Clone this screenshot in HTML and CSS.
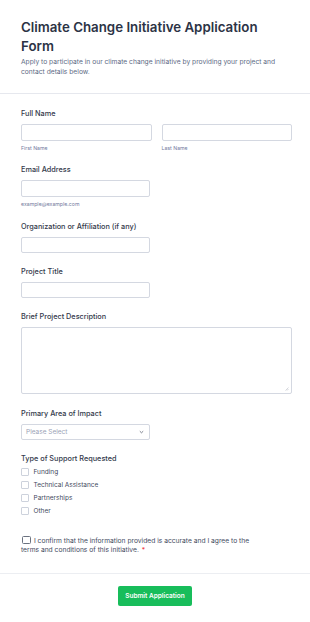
FILE: index.html
```html
<!DOCTYPE html>
<html lang="en">
<head>
<meta charset="utf-8">
<title>Climate Change Initiative Application Form</title>
<link rel="stylesheet" href="styles.css">
</head>
<body>
<div class="page">
  <header class="header">
    <h1 class="title">Climate Change Initiative Application Form</h1>
    <p class="subtitle">Apply to participate in our climate change initiative by providing your project and contact details below.</p>
  </header>
  <form class="form">
    <div class="field field-sub">
      <div class="label">Full Name</div>
      <div class="name-row">
        <div class="name-col">
          <input class="input" type="text">
          <div class="sublabel">First Name</div>
        </div>
        <div class="name-col">
          <input class="input" type="text">
          <div class="sublabel">Last Name</div>
        </div>
      </div>
    </div>
    <div class="field">
      <div class="label">Email Address</div>
      <input class="input input-half" type="email">
      <div class="sublabel">example@example.com</div>
    </div>
    <div class="field">
      <div class="label">Organization or Affiliation (if any)</div>
      <input class="input input-half" type="text">
    </div>
    <div class="field">
      <div class="label">Project Title</div>
      <input class="input input-half" type="text">
    </div>
    <div class="field field-text">
      <div class="label">Brief Project Description</div>
      <div class="textarea-wrap">
        <textarea class="textarea"></textarea>
        <svg class="grip" width="4" height="4" viewBox="0 0 4 4"><path d="M0.5 3.5 L3.5 0.5 M2 3.5 L3.5 2" stroke="#b8bcc6" stroke-width="0.6" fill="none"/></svg>
      </div>
    </div>
    <div class="field">
      <div class="label">Primary Area of Impact</div>
      <div class="select input-half">
        <span class="placeholder">Please Select</span>
        <svg class="chev" width="5" height="4" viewBox="0 0 5 4"><path d="M0.8 1.2 L2.5 2.8 L4.2 1.2" fill="none" stroke="#6b7280" stroke-width="0.9"/></svg>
      </div>
    </div>
    <div class="field field-checks">
      <div class="label label-checks">Type of Support Requested</div>
      <div class="check-row"><span class="box"></span><span class="check-text">Funding</span></div>
      <div class="check-row"><span class="box"></span><span class="check-text">Technical Assistance</span></div>
      <div class="check-row"><span class="box"></span><span class="check-text">Partnerships</span></div>
      <div class="check-row"><span class="box"></span><span class="check-text">Other</span></div>
    </div>
    <div class="confirm">
      <span class="confirm-box"></span> <span class="confirm-text">I confirm that the information provided is accurate and I agree to the</span> <span class="confirm-text">terms and conditions of this initiative.</span><span class="req">*</span>
    </div>
  </form>
  <div class="footer">
    <button class="submit" type="button">Submit Application</button>
  </div>
</div>
</body>
</html>
```

FILE: styles.css
```css
* { box-sizing: border-box; }
html, body { margin: 0; padding: 0; background: #ffffff; }
body {
  font-family: Inter, "Noto Sans", "Liberation Sans", sans-serif;
  color: #2c3345;
}
.page { width: 310px; }
.header {
  padding: 18px 18px 16px 21px;
  border-bottom: 1px solid #e6e8ee;
}
.title {
  margin: 0;
  font-size: 13.3px;
  line-height: 19px;
  font-weight: 600;
  color: #2c3345;
}
.subtitle {
  margin: 1px 0 0;
  font-size: 6.7px;
  line-height: 10px;
  color: #5d6a84;
}
.form {
  padding: 15px 18px 17px 21px;
  border-bottom: 1px solid #eceef2;
}
.field { margin-bottom: 13.5px; }
.field-sub { margin-bottom: 13px; }
.field-text { margin-bottom: 15px; }
.label {
  font-size: 7.3px;
  line-height: 10px;
  font-weight: 500;
  color: #343a4c;
  margin-bottom: 5px;
}
.name-row { display: flex; gap: 10px; }
.name-col { flex: 1; }
.input {
  display: block;
  width: 100%;
  height: 16.5px;
  border: 1px solid #d4d8e1;
  border-radius: 2px;
  background: #fff;
  padding: 0;
  margin: 0;
  outline: none;
}
.input-half { width: 129px; }
.sublabel {
  margin-top: 3.5px;
  font-size: 5.2px;
  line-height: 8px;
  color: #737a9e;
}
.textarea-wrap { position: relative; }
.textarea {
  display: block;
  width: 100%;
  height: 67px;
  border: 1px solid #d4d8e1;
  border-radius: 2px;
  padding: 0;
  margin: 0;
  outline: none;
  resize: none;
  font: inherit;
}
.grip {
  position: absolute;
  right: 3px;
  bottom: 3px;
}
.select {
  height: 16.5px;
  border: 1px solid #d4d8e1;
  border-radius: 2px;
  display: flex;
  align-items: center;
  justify-content: space-between;
  padding: 0 5px 0 4px;
}
.placeholder { font-size: 6.5px; color: #9aa1b5; }
.chev { display: block; }
.label-checks { margin-bottom: 2.5px; }
.field-checks { margin-bottom: 19px; }
.check-row {
  display: flex;
  align-items: center;
  height: 12.8px;
}
.box {
  width: 8px;
  height: 8px;
  border: 1px solid #cdd2dc;
  border-radius: 1px;
  margin-right: 4.5px;
  flex: none;
}
.check-text { font-size: 6.5px; color: #434a5e; }
.confirm {
  font-size: 6.7px;
  line-height: 9.7px;
  color: #434a5e;
  padding-right: 30px;
}
.confirm-box {
  display: inline-block;
  width: 8.5px;
  height: 8px;
  border: 1px solid #6b7280;
  border-radius: 1.5px;
  vertical-align: -1.5px;
  margin-left: 1px;
  margin-right: 1.5px;
}
.req { color: #f23a3c; margin-left: 3px; }
.footer {
  padding: 12px 0 17px;
  display: flex;
  justify-content: center;
}
.submit {
  width: 74px;
  height: 20px;
  border: none;
  border-radius: 2px;
  background: #18bd5b;
  color: #fff;
  font-family: inherit;
  font-size: 6.5px;
  font-weight: 600;
  padding: 0;
}
```
